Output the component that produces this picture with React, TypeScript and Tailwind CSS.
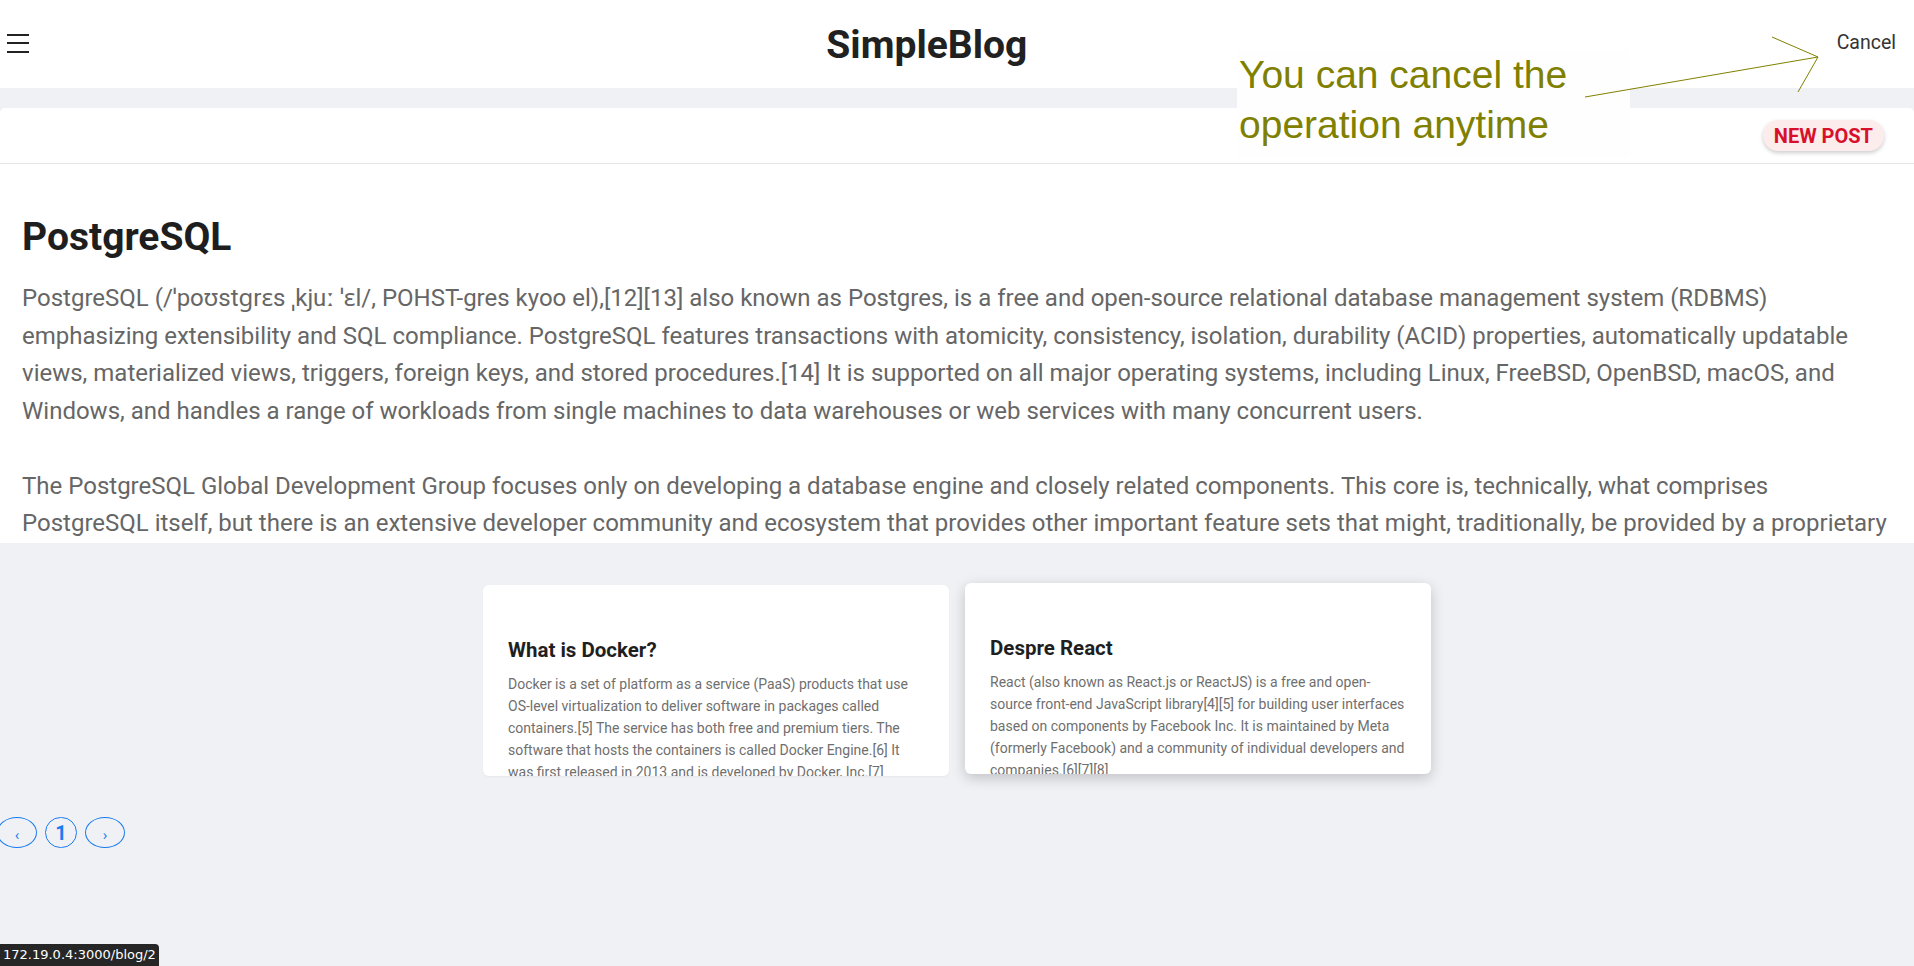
import React from "react";

const roboto = { fontFamily: "Roboto, 'Noto Sans', sans-serif" };

function Card({ title, body, raised }: { title: string; body: string; raised?: boolean }) {
  return (
    <div
      className={
        "w-[466px] h-[191px] overflow-hidden rounded-[6px] bg-white px-[25px] pt-[51px] " +
        (raised ? "shadow-[0_4px_14px_rgba(0,0,0,0.2)] -mt-[2px]" : "shadow-[0_1px_2px_rgba(0,0,0,0.04)]")
      }
    >
      <h3 className="text-[20.5px] leading-[28px] font-bold text-[#1f1f1f]">{title}</h3>
      <p className="mt-[9px] text-[14px] leading-[22px] text-[#6f6f6f]">{body}</p>
    </div>
  );
}

export default function App() {
  return (
    <div className="relative min-h-[966px] bg-[#f0f1f5]" style={roboto}>
      {/* Header */}
      <header className="h-[88px] bg-white flex items-center justify-between pl-[7px] pr-[18px]">
        <div className="flex flex-col gap-[6.5px] w-[22px] -mt-[2px]">
          <span className="block h-[2px] bg-[#222]" />
          <span className="block h-[2px] bg-[#222]" />
          <span className="block h-[2px] bg-[#222]" />
        </div>
        <h1 className="text-[39px] font-bold text-[#212121] mt-[3px] mr-[12px]">SimpleBlog</h1>
        <button className="text-[19.5px] text-[#333] -mt-[2px]">Cancel</button>
      </header>

      {/* Main */}
      <div className="pt-[20px]">
        <div className="bg-white rounded-t-[5px]">
          <div className="h-[56px] border-b border-[#e7e7e7] flex items-center justify-end pr-[30px]">
            <button className="h-[31px] px-[11px] rounded-full bg-[#fdecec] text-[#d8102b] text-[20px] font-bold leading-none shadow-[0_2px_4px_rgba(0,0,0,0.2)]">
              NEW POST
            </button>
          </div>
          <article className="h-[379px] overflow-hidden pl-[22px] pr-[22px] pt-[49px]">
            <h2 className="text-[39px] leading-[48px] font-bold text-[#1e1e1e]">PostgreSQL</h2>
            <div className="mt-[19px] text-[24px] leading-[37.5px] text-[#666]">
              <p>
                PostgreSQL (/ˈpoʊstɡrɛs ˌkjuː ˈɛl/, POHST-gres kyoo el),[12][13] also known as Postgres, is a free and
                open-source relational database management system (RDBMS) emphasizing extensibility and SQL compliance.
                PostgreSQL features transactions with atomicity, consistency, isolation, durability (ACID) properties,
                automatically updatable views, materialized views, triggers, foreign keys, and stored procedures.[14] It is
                supported on all major operating systems, including Linux, FreeBSD, OpenBSD, macOS, and Windows, and handles a
                range of workloads from single machines to data warehouses or web services with many concurrent users.
              </p>
              <br />
              <p>
                The PostgreSQL Global Development Group focuses only on developing a database engine and closely related
                components. This core is, technically, what comprises PostgreSQL itself, but there is an extensive developer
                community and ecosystem that provides other important feature sets that might, traditionally, be provided by
                a proprietary software vendor. These include special-purpose database engine features, like those needed to
                support a geographical or temporal database.
              </p>
            </div>
          </article>
        </div>

        {/* Cards */}
        <div className="pt-[42px] flex justify-center gap-[16px]">
          <Card
            title="What is Docker?"
            body="Docker is a set of platform as a service (PaaS) products that use OS-level virtualization to deliver software in packages called containers.[5] The service has both free and premium tiers. The software that hosts the containers is called Docker Engine.[6] It was first released in 2013 and is developed by Docker, Inc.[7]"
          />
          <Card
            raised
            title="Despre React"
            body="React (also known as React.js or ReactJS) is a free and open-source front-end JavaScript library[4][5] for building user interfaces based on components by Facebook Inc. It is maintained by Meta (formerly Facebook) and a community of individual developers and companies.[6][7][8]"
          />
        </div>

        {/* Pagination */}
        <div className="mt-[41px] flex items-center gap-[8px] -ml-[3px]">
          <button className="w-[40px] h-[31px] rounded-[50%] border border-[#1a7cf0] text-[#1a7cf0] text-[15px] leading-none pt-[5px]">
            ‹
          </button>
          <button className="w-[32px] h-[31px] rounded-full border border-[#1a7cf0] text-[#1a7cf0] text-[20px] font-bold leading-none">
            1
          </button>
          <button className="w-[40px] h-[31px] rounded-[50%] border border-[#1a7cf0] text-[#1a7cf0] text-[15px] leading-none pt-[5px]">
            ›
          </button>
        </div>
      </div>

      {/* Annotation overlay */}
      <div
        className="absolute left-[1237px] top-[50px] w-[393px] h-[107px] bg-[#fefefe] pl-[2px] text-[39px] leading-[50px] text-[#808000]"
        style={{ fontFamily: "'Liberation Sans', Arial, sans-serif" }}
      >
        You can cancel the
        <br />
        operation anytime
      </div>
      <svg className="absolute left-0 top-0 pointer-events-none" width="1914" height="120">
        <line x1="1585" y1="97" x2="1818" y2="57" stroke="#808000" strokeWidth="1" />
        <line x1="1772" y1="37" x2="1818" y2="57" stroke="#808000" strokeWidth="1" />
        <line x1="1798" y1="92" x2="1818" y2="57" stroke="#808000" strokeWidth="1" />
      </svg>

      {/* Status bar */}
      <div
        className="fixed left-0 bottom-0 h-[22px] px-[3px] bg-[#262626] text-white text-[13px] leading-[22px] rounded-tr-[4px]"
        style={{ fontFamily: "'DejaVu Sans', sans-serif" }}
      >
        172.19.0.4:3000/blog/2
      </div>
    </div>
  );
}
